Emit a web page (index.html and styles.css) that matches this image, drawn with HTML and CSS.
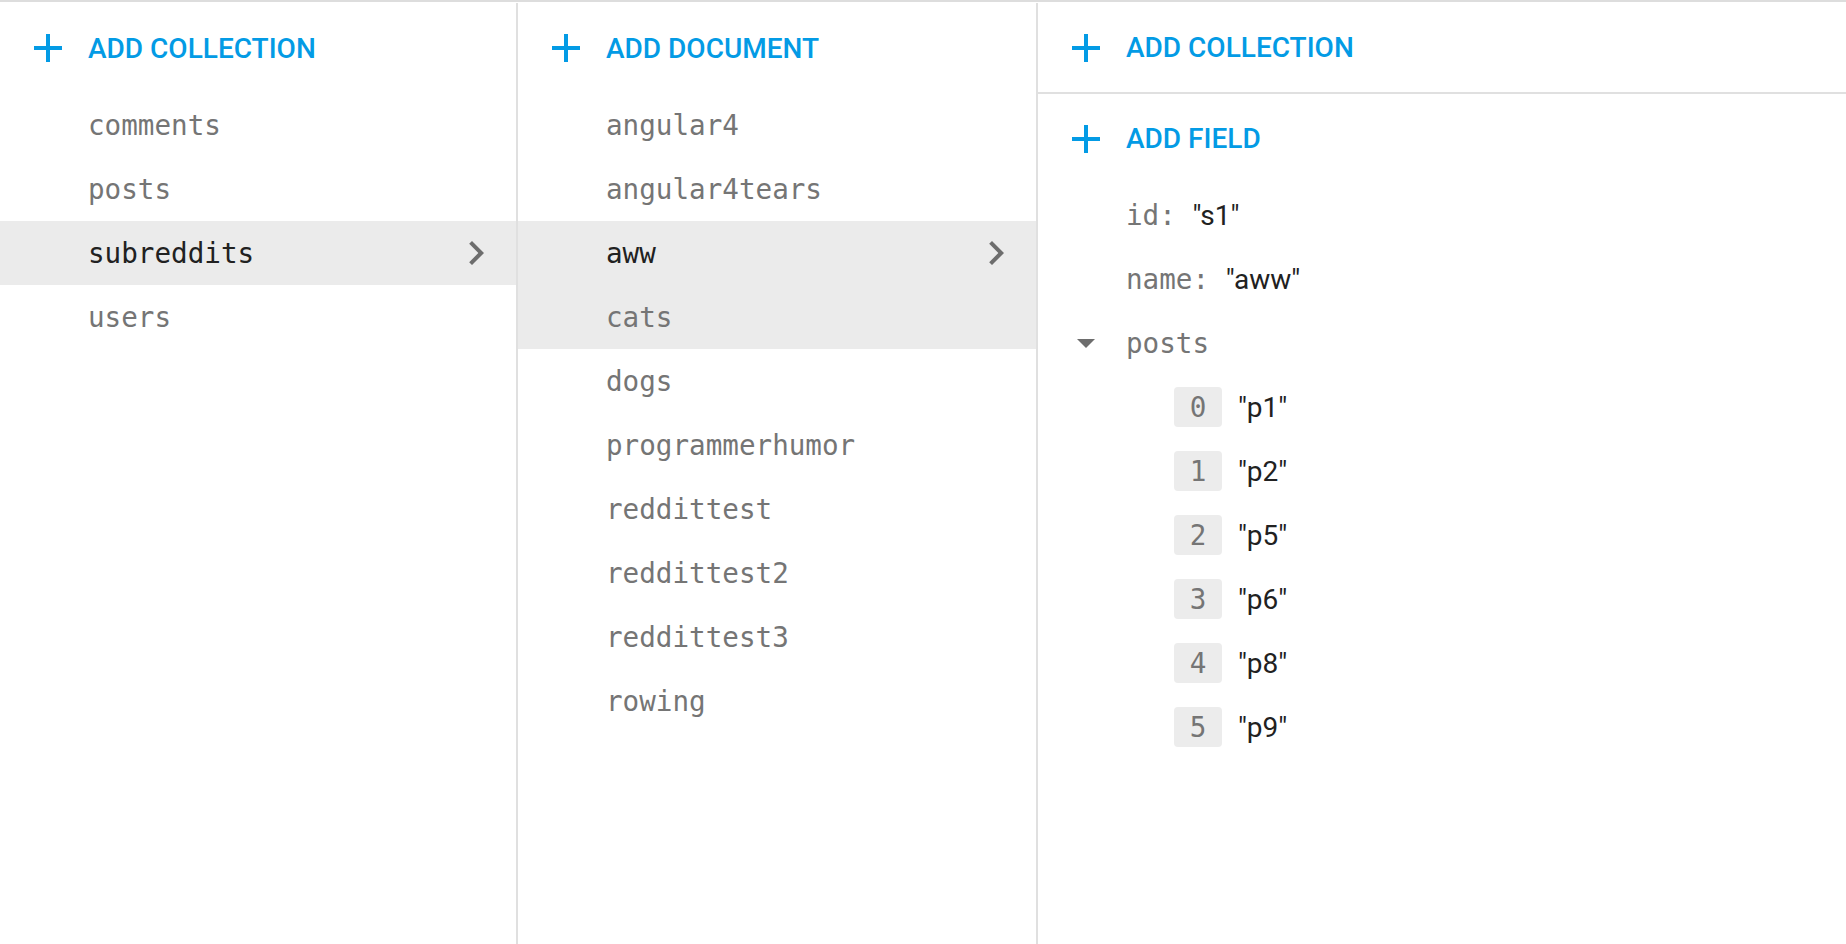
FILE: index.html
```html
<!DOCTYPE html>
<html>
<head>
<meta charset="utf-8">
<link rel="stylesheet" href="styles.css">
</head>
<body>
<div class="panels">
  <section class="panel panel-collections">
    <div class="panel-header">
      <span class="icon-box"><svg class="plus" viewBox="0 0 28 28"><path d="M12 0h4v12h12v4H16v12h-4V16H0v-4h12z"/></svg></span>
      <span class="action">ADD COLLECTION</span>
    </div>
    <ul class="list">
      <li class="item">comments</li>
      <li class="item">posts</li>
      <li class="item selected">subreddits<svg class="chevron" viewBox="0 0 24 24"><path d="M10 6L8.59 7.41 13.17 12l-4.58 4.59L10 18l6-6z"/></svg></li>
      <li class="item">users</li>
    </ul>
  </section>
  <section class="panel panel-documents">
    <div class="panel-header">
      <span class="icon-box"><svg class="plus" viewBox="0 0 28 28"><path d="M12 0h4v12h12v4H16v12h-4V16H0v-4h12z"/></svg></span>
      <span class="action">ADD DOCUMENT</span>
    </div>
    <ul class="list">
      <li class="item">angular4</li>
      <li class="item">angular4tears</li>
      <li class="item selected">aww<svg class="chevron" viewBox="0 0 24 24"><path d="M10 6L8.59 7.41 13.17 12l-4.58 4.59L10 18l6-6z"/></svg></li>
      <li class="item hover">cats</li>
      <li class="item">dogs</li>
      <li class="item">programmerhumor</li>
      <li class="item">reddittest</li>
      <li class="item">reddittest2</li>
      <li class="item">reddittest3</li>
      <li class="item">rowing</li>
    </ul>
  </section>
  <section class="panel panel-fields">
    <div class="panel-header bordered">
      <span class="icon-box"><svg class="plus" viewBox="0 0 28 28"><path d="M12 0h4v12h12v4H16v12h-4V16H0v-4h12z"/></svg></span>
      <span class="action">ADD COLLECTION</span>
    </div>
    <div class="panel-header field-add">
      <span class="icon-box"><svg class="plus" viewBox="0 0 28 28"><path d="M12 0h4v12h12v4H16v12h-4V16H0v-4h12z"/></svg></span>
      <span class="action">ADD FIELD</span>
    </div>
    <ul class="fields">
      <li class="field"><span class="key">id: </span><span class="value">"s1"</span></li>
      <li class="field"><span class="key">name: </span><span class="value">"aww"</span></li>
      <li class="field field-parent">
        <span class="icon-box"><svg class="caret" viewBox="0 0 18 9"><path d="M0 0h18L9 9z"/></svg></span>
        <span class="key">posts</span>
      </li>
      <li class="field array-item"><span class="index">0</span><span class="value">"p1"</span></li>
      <li class="field array-item"><span class="index">1</span><span class="value">"p2"</span></li>
      <li class="field array-item"><span class="index">2</span><span class="value">"p5"</span></li>
      <li class="field array-item"><span class="index">3</span><span class="value">"p6"</span></li>
      <li class="field array-item"><span class="index">4</span><span class="value">"p8"</span></li>
      <li class="field array-item"><span class="index">5</span><span class="value">"p9"</span></li>
    </ul>
  </section>
</div>
</body>
</html>
```

FILE: styles.css
```css
* { box-sizing: border-box; }
html, body {
  margin: 0;
  padding: 0;
  background: #ffffff;
  height: 100%;
}
body {
  font-family: Roboto, "Noto Sans", sans-serif;
  color: #212121;
  overflow: hidden;
}
ul { list-style: none; margin: 0; padding: 0; }

.panels {
  display: flex;
  height: 944px;
  border-top: 2px solid #dddddd;
  padding-top: 1px;
}
.panel {
  display: flex;
  flex-direction: column;
  height: 100%;
}
.panel-collections {
  width: 518px;
  border-right: 2px solid #e0e0e0;
}
.panel-documents {
  width: 520px;
  border-right: 2px solid #e0e0e0;
}
.panel-fields {
  flex: 1;
}

.panel-header {
  display: flex;
  align-items: center;
  height: 90px;
  padding-left: 24px;
}
.panel-header.bordered {
  border-bottom: 2px solid #e0e0e0;
  height: 91px;
}
.panel-header.field-add {
  height: 89px;
}
.icon-box {
  width: 48px;
  height: 48px;
  display: flex;
  align-items: center;
  justify-content: center;
  flex: none;
  margin-right: 16px;
}
.plus {
  width: 28px;
  height: 28px;
  fill: #039be5;
}
.action {
  font-family: Roboto, sans-serif;
  font-weight: 500;
  font-size: 28px;
  color: #039be5;
  letter-spacing: 0;
}

.item {
  display: flex;
  align-items: center;
  height: 64px;
  padding-left: 88px;
  padding-right: 16px;
  font-family: "DejaVu Sans Mono", "Liberation Mono", monospace;
  font-size: 27.6px;
  color: #757575;
}
.item.selected {
  background: #ebebeb;
  color: #212121;
}
.item.hover {
  background: #ebebeb;
}
.chevron {
  margin-left: auto;
  width: 48px;
  height: 48px;
  fill: #6d6d6d;
}

.field {
  display: flex;
  align-items: center;
  height: 64px;
  padding-left: 88px;
}
.field-parent {
  padding-left: 24px;
}
.caret {
  width: 18px;
  height: 9px;
  fill: #6d6d6d;
}
.key {
  font-family: "DejaVu Sans Mono", "Liberation Mono", monospace;
  font-size: 27.6px;
  color: #757575;
  white-space: pre;
}
.value {
  font-family: Roboto, sans-serif;
  font-size: 28px;
  color: #212121;
}
.array-item {
  padding-left: 136px;
}
.index {
  width: 48px;
  height: 40px;
  border-radius: 4px;
  background: #ececec;
  display: flex;
  align-items: center;
  justify-content: center;
  margin-right: 16px;
  font-family: "DejaVu Sans Mono", "Liberation Mono", monospace;
  font-size: 27.6px;
  color: #757575;
}
```
